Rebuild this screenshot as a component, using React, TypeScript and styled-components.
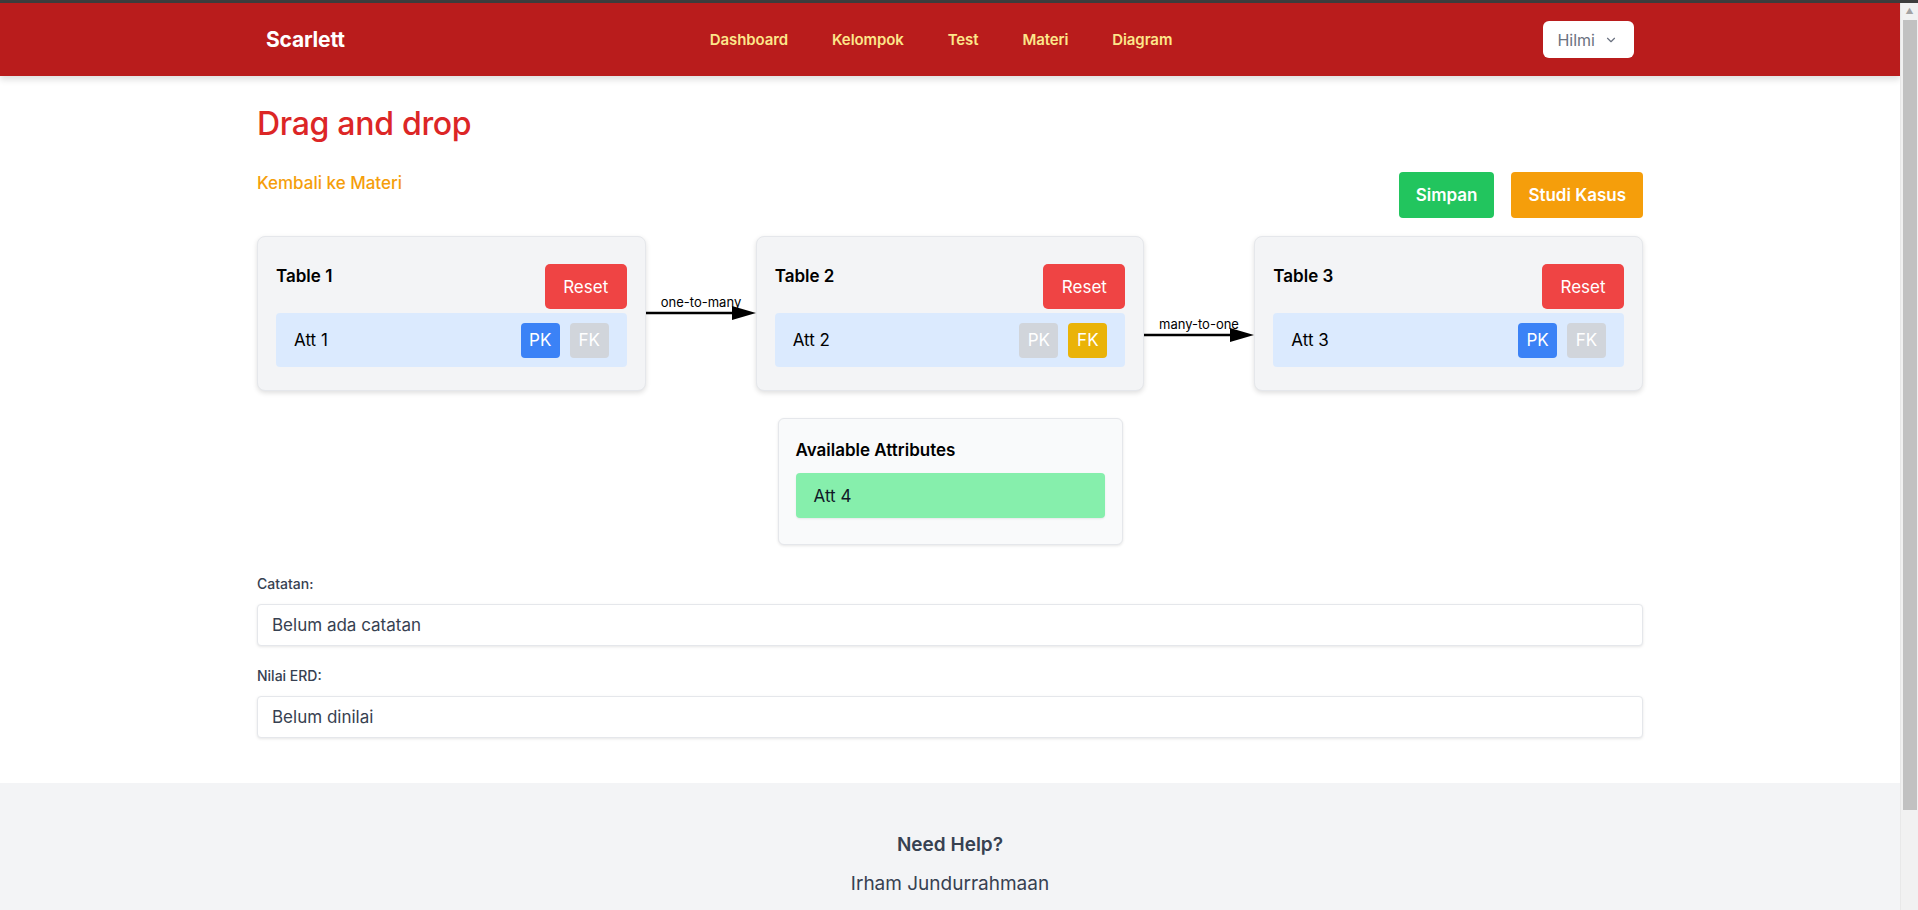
import React from 'react';
import styled, { createGlobalStyle } from 'styled-components';
import { ChevronDown } from 'lucide-react';

const GlobalStyle = createGlobalStyle`
    body {
        margin: 0;
        padding-right: 18px;
        font-family: Inter, "Noto Sans", Arial, sans-serif;
        color: #111827;
        background: #ffffff;
    }
`;

type Attr = { name: string; pk: boolean; fk: boolean };
type Table = { title: string; attr: Attr };

const tables: Table[] = [
    { title: 'Table 1', attr: { name: 'Att 1', pk: true, fk: false } },
    { title: 'Table 2', attr: { name: 'Att 2', pk: false, fk: true } },
    { title: 'Table 3', attr: { name: 'Att 3', pk: true, fk: false } },
];

const relations = [
    { label: 'one-to-many', y: 77 },
    { label: 'many-to-one', y: 99 },
];

const navLinks = ['Dashboard', 'Kelompok', 'Test', 'Materi', 'Diagram'];

const Connector = ({ label, y }: { label: string; y: number }) => (
    <S.Connector width="110" height="155" viewBox="0 0 110 155">
        <line x1="0" y1={y} x2="100" y2={y} stroke="#000" strokeWidth="2.6" />
        <polygon points={`86,${y - 7} 110,${y} 86,${y + 7}`} fill="#000" />
        <text x="55" y={y - 6} textAnchor="middle" fontSize="13" fontFamily="Inter, Arial, sans-serif" fill="#000">
            {label}
        </text>
    </S.Connector>
);

const TableCard = ({ table }: { table: Table }) => (
    <S.Card>
        <S.CardHeader>
            <S.CardTitle>{table.title}</S.CardTitle>
            <S.ResetButton>Reset</S.ResetButton>
        </S.CardHeader>
        <S.AttrRow>
            <span>{table.attr.name}</span>
            <S.Badges>
                <S.Badge $bg={table.attr.pk ? '#3b82f6' : '#d1d5db'}>PK</S.Badge>
                <S.Badge $bg={table.attr.fk ? '#eab308' : '#d1d5db'}>FK</S.Badge>
            </S.Badges>
        </S.AttrRow>
    </S.Card>
);

const App = () => {
    return (
        <>
            <GlobalStyle />
            <S.TopStrip />
            <S.Navbar>
                <S.NavInner>
                    <S.Brand>Scarlett</S.Brand>
                    <S.NavLinks>
                        {navLinks.map(link => (
                            <S.NavLink key={link}>{link}</S.NavLink>
                        ))}
                    </S.NavLinks>
                    <S.UserButton>
                        Hilmi
                        <ChevronDown size={14} strokeWidth={2} />
                    </S.UserButton>
                </S.NavInner>
            </S.Navbar>

            <S.Main>
                <S.Title>Drag and drop</S.Title>
                <S.ActionRow>
                    <S.BackLink>Kembali ke Materi</S.BackLink>
                    <S.Actions>
                        <S.ActionButton $bg="#22c55e">Simpan</S.ActionButton>
                        <S.ActionButton $bg="#f59e0b">Studi Kasus</S.ActionButton>
                    </S.Actions>
                </S.ActionRow>

                <S.Diagram>
                    <TableCard table={tables[0]} />
                    <Connector {...relations[0]} />
                    <TableCard table={tables[1]} />
                    <Connector {...relations[1]} />
                    <TableCard table={tables[2]} />
                </S.Diagram>

                <S.Pool>
                    <S.PoolTitle>Available Attributes</S.PoolTitle>
                    <S.PoolItem>Att 4</S.PoolItem>
                </S.Pool>

                <S.Field $gap={29}>
                    <S.Label>Catatan:</S.Label>
                    <S.Box>Belum ada catatan</S.Box>
                </S.Field>
                <S.Field $gap={20}>
                    <S.Label>Nilai ERD:</S.Label>
                    <S.Box>Belum dinilai</S.Box>
                </S.Field>
            </S.Main>

            <S.Footer>
                <S.FooterTitle>Need Help?</S.FooterTitle>
                <S.FooterText>Irham Jundurrahmaan</S.FooterText>
            </S.Footer>

            <S.ScrollTrack>
                <S.ScrollArrow>▲</S.ScrollArrow>
                <S.ScrollThumb />
            </S.ScrollTrack>
        </>
    );
};

const S = {
    TopStrip: styled.div`
        height: 3px;
        margin-right: -18px;
        background: #3d3d3d;
    `,
    Navbar: styled.nav`
        background: #b91c1c;
        height: 73px;
        box-shadow: 0 4px 6px rgba(0, 0, 0, 0.12);
        position: relative;
    `,
    NavInner: styled.div`
        width: 1386px;
        height: 100%;
        margin: 0 auto;
        padding: 0 9px;
        box-sizing: border-box;
        display: flex;
        align-items: center;
        justify-content: space-between;
    `,
    Brand: styled.div`
        color: #ffffff;
        font-size: 21px;
        font-weight: 700;
        letter-spacing: -0.2px;
    `,
    NavLinks: styled.div`
        display: flex;
        gap: 44px;
        margin-right: 6px;
    `,
    NavLink: styled.a`
        color: #fde68a;
        font-size: 15px;
        font-weight: 600;
        letter-spacing: -0.1px;
        cursor: pointer;
    `,
    UserButton: styled.button`
        display: flex;
        align-items: center;
        gap: 9px;
        height: 37px;
        padding: 0 16px 0 14px;
        background: #ffffff;
        border: none;
        border-radius: 6px;
        color: #6b7280;
        font-family: inherit;
        font-size: 16px;
    `,
    Main: styled.main`
        width: 1386px;
        margin: 0 auto;
        padding: 28px 0 45px;
    `,
    Title: styled.h1`
        margin: 0;
        color: #dc2626;
        font-size: 32px;
        line-height: 40px;
        font-weight: 500;
        letter-spacing: -0.3px;
    `,
    ActionRow: styled.div`
        display: flex;
        justify-content: space-between;
        align-items: flex-start;
        margin-top: 27px;
    `,
    BackLink: styled.a`
        color: #f59e0b;
        font-size: 17px;
        line-height: 24px;
        font-weight: 500;
        cursor: pointer;
    `,
    Actions: styled.div`
        display: flex;
        gap: 17px;
        margin-top: 1px;
    `,
    ActionButton: styled.button<{ $bg: string }>`
        height: 46px;
        padding: 0 17px;
        border: none;
        border-radius: 4px;
        background: ${p => p.$bg};
        color: #ffffff;
        font-family: inherit;
        font-size: 17px;
        font-weight: 600;
    `,
    Diagram: styled.div`
        display: flex;
        align-items: flex-start;
        margin-top: 18px;
    `,
    Connector: styled.svg`
        flex: 0 0 110px;
        display: block;
    `,
    Card: styled.div`
        flex: 1;
        height: 155px;
        box-sizing: border-box;
        padding: 27px 18px 0;
        background: #f3f4f6;
        border: 1px solid #e5e7eb;
        border-radius: 8px;
        box-shadow: 0 2px 5px rgba(0, 0, 0, 0.13);
    `,
    CardHeader: styled.div`
        display: flex;
        justify-content: space-between;
        align-items: flex-start;
        margin-bottom: 4px;
    `,
    CardTitle: styled.div`
        font-size: 17px;
        line-height: 24px;
        font-weight: 600;
        color: #000000;
    `,
    ResetButton: styled.button`
        width: 82px;
        height: 45px;
        border: none;
        border-radius: 5px;
        background: #ef4444;
        color: #ffffff;
        font-family: inherit;
        font-size: 17px;
    `,
    AttrRow: styled.div`
        height: 54px;
        padding: 0 18px;
        display: flex;
        align-items: center;
        justify-content: space-between;
        background: #dbeafe;
        border-radius: 4px;
        font-size: 17px;
        color: #000000;
    `,
    Badges: styled.div`
        display: flex;
        gap: 10px;
    `,
    Badge: styled.span<{ $bg: string }>`
        width: 39px;
        height: 35px;
        display: flex;
        align-items: center;
        justify-content: center;
        border-radius: 4px;
        background: ${p => p.$bg};
        color: #ffffff;
        font-size: 17px;
    `,
    Pool: styled.div`
        width: 345px;
        box-sizing: border-box;
        margin: 27px auto 0;
        padding: 19px 17px 26px;
        background: #f9fafb;
        border: 1px solid #e5e7eb;
        border-radius: 6px;
        box-shadow: 0 1px 3px rgba(0, 0, 0, 0.1);
    `,
    PoolTitle: styled.div`
        font-size: 17px;
        line-height: 24px;
        font-weight: 600;
        color: #000000;
        margin-bottom: 11px;
    `,
    PoolItem: styled.div`
        height: 45px;
        display: flex;
        align-items: center;
        padding: 0 18px;
        background: #86efac;
        border-radius: 4px;
        box-shadow: 0 1px 2px rgba(0, 0, 0, 0.08);
        font-size: 17px;
        color: #111827;
    `,
    Field: styled.div<{ $gap: number }>`
        margin-top: ${p => p.$gap}px;
    `,
    Label: styled.div`
        font-size: 14px;
        line-height: 20px;
        font-weight: 500;
        color: #374151;
        margin-bottom: 10px;
    `,
    Box: styled.div`
        height: 42px;
        box-sizing: border-box;
        display: flex;
        align-items: center;
        padding: 0 14px;
        background: #ffffff;
        border: 1px solid #e5e7eb;
        border-radius: 4px;
        box-shadow: 0 1px 3px rgba(0, 0, 0, 0.1);
        font-size: 17px;
        color: #374151;
    `,
    Footer: styled.footer`
        background: #f3f4f6;
        padding: 48px 0 108px;
        display: flex;
        flex-direction: column;
        align-items: center;
        gap: 11px;
        color: #374151;
    `,
    FooterTitle: styled.div`
        font-size: 19px;
        line-height: 28px;
        font-weight: 600;
    `,
    FooterText: styled.div`
        font-size: 19px;
        line-height: 28px;
    `,
    ScrollTrack: styled.div`
        position: fixed;
        top: 3px;
        right: 0;
        bottom: 0;
        width: 18px;
        background: #f1f1f1;
        border-left: 1px solid #e8e8e8;
        box-sizing: border-box;
        display: flex;
        flex-direction: column;
        align-items: center;
    `,
    ScrollArrow: styled.div`
        height: 17px;
        line-height: 17px;
        font-size: 8px;
        color: #a3a3a3;
    `,
    ScrollThumb: styled.div`
        width: 14px;
        height: 790px;
        background: #c1c1c1;
    `,
};

export default App;
